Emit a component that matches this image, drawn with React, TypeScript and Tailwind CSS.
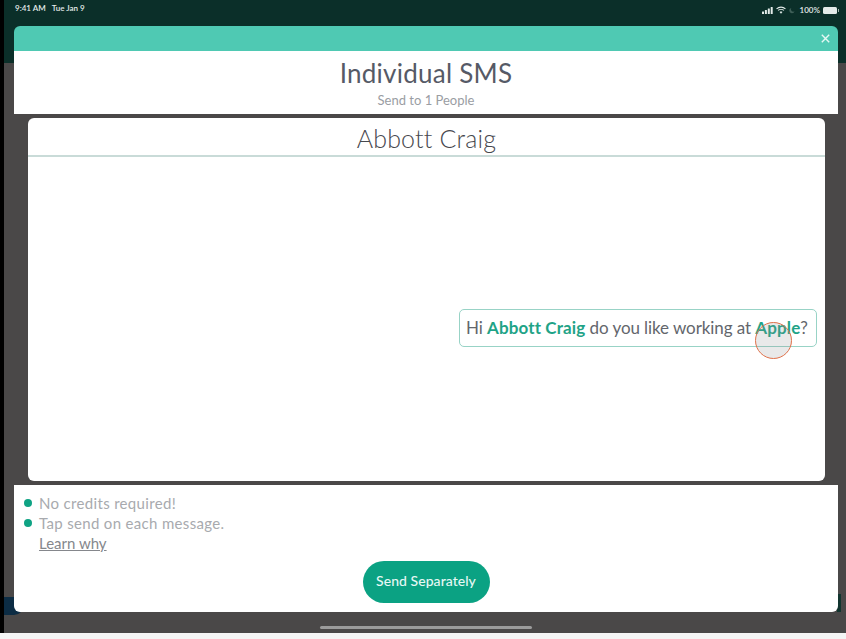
const font = { fontFamily: "Lato, 'Open Sans', sans-serif" };

const StatusIcons = () => (
  <div className="flex items-center gap-[3px] text-[8px] font-semibold text-[#e3ebe9]">
    <svg width="11" height="7" viewBox="0 0 11 7" fill="#e3ebe9">
      <rect x="0" y="4.4" width="2" height="2.6" rx="0.3" />
      <rect x="2.9" y="3" width="2" height="4" rx="0.3" />
      <rect x="5.8" y="1.5" width="2" height="5.5" rx="0.3" />
      <rect x="8.7" y="0" width="2" height="7" rx="0.3" />
    </svg>
    <svg width="10" height="8" viewBox="0 0 11 8" fill="none" stroke="#e3ebe9" strokeWidth="1.2">
      <path d="M0.6 2.8C3.4 0.2 7.6 0.2 10.4 2.8" />
      <path d="M2.3 4.5C4 3 7 3 8.7 4.5" />
      <path d="M5.5 8 3.9 6.1C4.8 5.4 6.2 5.4 7.1 6.1Z" fill="#e3ebe9" stroke="none" />
    </svg>
    <svg width="6" height="7" viewBox="0 0 8 8" fill="#3f5f58">
      <path d="M3 0.6A3.6 3.6 0 1 0 7.4 5 3.2 3.2 0 0 1 3 0.6Z" />
    </svg>
    <span className="ml-[2px]">100%</span>
    <div className="flex items-center gap-[1px]">
      <div className="h-[7px] w-[14px] rounded-[1.5px] bg-[#e3ebe9]" />
      <div className="h-[3px] w-[1px] bg-[#9fb0ac]" />
    </div>
  </div>
);

export default function App() {
  return (
    <div style={font} className="flex h-[639px] w-[846px] flex-col overflow-hidden bg-[#f5f5f5]">
      <div className="flex h-[633px] bg-black pl-[4px]">
        <div className="relative flex min-w-0 flex-1 flex-col bg-[linear-gradient(#0b2f29_63px,#4a4848_63px)]">
          {/* bits of the page behind the modal */}
          <div className="absolute bottom-[18px] left-0 h-[18px] w-[20px] rounded-br-[10px] bg-[#0c2c44]" />
          <div className="absolute bottom-[21px] right-[5px] h-[18px] w-[4px] bg-[#12352f]" />

          <div className="relative flex h-[26px] items-start justify-between pl-[11px] pr-[7px] pt-[4px]">
            <div className="flex gap-[6px] text-[8px] font-semibold leading-[9px] text-[#e3ebe9]">
              <span>9:41 AM</span>
              <span>Tue Jan 9</span>
            </div>
            <StatusIcons />
          </div>

          <div className="relative ml-[10px] mr-[8px] flex h-[586px] flex-col">
            <div className="flex h-[25px] items-center justify-end rounded-t-[6px] bg-[#4fc9b3] pr-[8px]">
              <svg width="9" height="9" viewBox="0 0 9 9" stroke="#e6f8f4" strokeWidth="1.4">
                <path d="M0.8 0.8 8.2 8.2M8.2 0.8 0.8 8.2" />
              </svg>
            </div>

            <div className="flex h-[63px] flex-col items-center bg-white text-center">
              <h1 className="mt-[6px] text-[26px] leading-[32px] tracking-[0.25px] text-[#565a66]">Individual SMS</h1>
              <p className="mt-[3px] text-[13px] leading-[16px] text-[#9a9da3]">Send to 1 People</p>
            </div>

            <div className="ml-[14px] mr-[13px] mt-[4px] flex h-[363px] flex-col rounded-[6px] bg-white">
              <div className="h-[39px] border-b-2 border-[#c9dbd8] text-center text-[25px] font-light leading-[40px] tracking-[0.2px] text-[#47484e]">
                Abbott Craig
              </div>
              <div className="flex flex-1 items-start justify-end pr-[8px] pt-[152px]">
                <div className="relative flex h-[38px] w-[358px] items-center whitespace-nowrap rounded-[5px] border-[1.5px] border-[#98d3c6] bg-white pb-[1px] pl-[6px] text-[17px] tracking-[-0.08px] text-[#63666c]">
                  <span>
                    Hi <b className="font-bold tracking-[0.12px] text-[#1fa387]">Abbott Craig</b> do you like working at{" "}
                    <b className="font-bold tracking-[0.12px] text-[#1fa387]">Apple</b>?
                  </span>
                  <div className="absolute left-[295px] top-[12px] h-[37px] w-[37px] rounded-full border-[1.5px] border-[#e0714a] bg-[#8f8f8f]/20" />
                </div>
              </div>
            </div>

            <div className="mt-[4px] flex h-[127px] flex-col rounded-b-[6px] bg-white pl-[10px] pt-[8px]">
              <ul className="text-[15px] leading-[20px] tracking-[0.33px] text-[#a8aaae]">
                <li className="flex items-center gap-[7px]">
                  <span className="h-[8px] w-[8px] rounded-full bg-[#0fa384]" />
                  No credits required!
                </li>
                <li className="flex items-center gap-[7px]">
                  <span className="h-[8px] w-[8px] rounded-full bg-[#0fa384]" />
                  Tap send on each message.
                </li>
                <li className="pl-[15px] tracking-normal text-[#85878c] underline">Learn why</li>
              </ul>
              <div className="mt-[8px] flex justify-center pr-[10px]">
                <button className="h-[42px] w-[127px] rounded-full bg-[#0ba283] pb-[3px] text-[14px] font-medium tracking-[0.05px] text-[#e6f8f4]">
                  Send Separately
                </button>
              </div>
            </div>
          </div>

          <div className="mt-[14px] flex justify-center pl-[2px]">
            <div className="h-[3px] w-[212px] rounded-full bg-[#9b9b9b]" />
          </div>
        </div>
      </div>
    </div>
  );
}
